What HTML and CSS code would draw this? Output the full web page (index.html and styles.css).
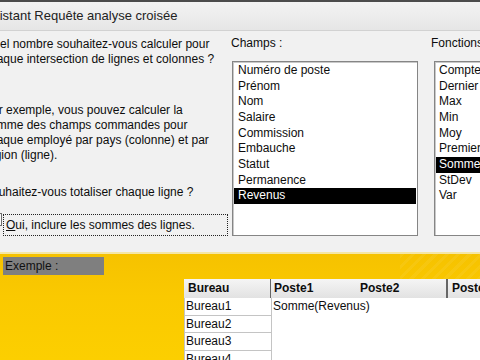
FILE: index.html
```html
<!DOCTYPE html>
<html lang="fr">
<head>
<meta charset="utf-8">
<title>Assistant Requête analyse croisée</title>
<link rel="stylesheet" href="styles.css">
</head>
<body>
<div class="screen">
  <div class="topline"></div>
  <div class="titlebar"><span class="title">Assistant Requête analyse croisée</span></div>
  <div class="dialog">
    <div class="left">
      <p class="p1">Quel nombre souhaitez-vous calculer pour<br>chaque intersection de lignes et colonnes ?</p>
      <p class="p2">Par exemple, vous pouvez calculer la<br>somme des champs commandes pour<br>chaque employé par pays (colonne) et par<br>région (ligne).</p>
      <p class="p3">Souhaitez-vous totaliser chaque ligne ?</p>
      <div class="check-row">
        <span class="checkbox"></span>
        <span class="focus"><u>O</u>ui, inclure les sommes des lignes.</span>
      </div>
    </div>
    <div class="col champs">
      <div class="label">Champs :</div>
      <ul class="list">
        <li>Numéro de poste</li>
        <li>Prénom</li>
        <li>Nom</li>
        <li>Salaire</li>
        <li>Commission</li>
        <li>Embauche</li>
        <li>Statut</li>
        <li>Permanence</li>
        <li class="sel">Revenus</li>
      </ul>
    </div>
    <div class="col fonctions">
      <div class="label">Fonctions :</div>
      <ul class="list">
        <li>Compte</li>
        <li>Dernier</li>
        <li>Max</li>
        <li>Min</li>
        <li>Moy</li>
        <li>Premier</li>
        <li class="sel">Somme</li>
        <li>StDev</li>
        <li>Var</li>
      </ul>
    </div>
  </div>
  <div class="sample">
    <div class="stripes"></div>
    <div class="sample-label">Exemple :</div>
    <div class="grid">
      <div class="hrow">
        <div class="hcell c-bureau">Bureau</div>
        <div class="hcell c-poste1">Poste1</div>
        <div class="hcell c-poste2">Poste2</div>
        <div class="hcell c-poste3">Poste3</div>
      </div>
      <div class="gbody">
        <div class="rowheads">
          <div class="rcell">Bureau1</div>
          <div class="rcell">Bureau2</div>
          <div class="rcell">Bureau3</div>
          <div class="rcell">Bureau4</div>
        </div>
        <div class="data">Somme(Revenus)</div>
      </div>
    </div>
  </div>
</div>
</body>
</html>
```

FILE: styles.css
```css
* { box-sizing: border-box; }
html, body {
  margin: 0;
  padding: 0;
}
body {
  width: 480px;
  height: 360px;
  overflow: hidden;
  font-family: "Liberation Sans", Arial, sans-serif;
  font-size: 12px;
  color: #0d0d0d;
  background: #f0f0f0;
}
.screen {
  width: 480px;
  height: 360px;
  display: flex;
  flex-direction: column;
  overflow: hidden;
}
.topline {
  height: 2px;
  flex: none;
  background: #4c4c4c;
}
.titlebar {
  height: 29px;
  flex: none;
  background: linear-gradient(#f3f3f3, #e6e6e6);
  border-bottom: 1px solid #d2d2d2;
  display: flex;
  align-items: center;
  padding-bottom: 2px;
  overflow: hidden;
  white-space: nowrap;
}
.title {
  margin-left: -22px;
  font-size: 13px;
  color: #222;
}
.dialog {
  height: 221px;
  flex: none;
  display: flex;
  background: #f1f1f1;
  overflow: hidden;
  padding-top: 5px;
}
.left {
  flex: none;
  width: 245px;
  margin-left: -16px;
  margin-right: 2px;
  line-height: 15px;
  white-space: nowrap;
}
.left p { margin: 0; }
.p1 { padding-top: 1px; }
.p2 { margin-top: 36px !important; }
.p3 { margin-top: 22px !important; }
.check-row {
  display: flex;
  align-items: flex-start;
  margin-top: 14px;
}
.checkbox {
  flex: none;
  width: 13px;
  height: 13px;
  border: 1px solid #6d6d6d;
  background: #fafafa;
  margin-left: 5px;
  margin-top: -1px;
}
.focus {
  flex: none;
  width: 225px;
  height: 22px;
  margin-left: 1px;
  border: 1px dotted #222;
  padding: 3px 0 0 2px;
  line-height: 15px;
}
.col { flex: none; }
.champs { width: 200px; }
.fonctions { width: 120px; }
.label {
  line-height: 15px;
  height: 15px;
}
.list {
  list-style: none;
  margin: 10px 0 0 1px;
  padding: 1px 0 0 0;
  height: 175px;
  background: #fff;
  border: 1px solid #858585;
  box-shadow: inset 1px 1px 0 #c9c9c9;
}
.champs .list { width: 186px; }
.fonctions .list { width: 110px; margin-left: 3px; }
.list li {
  height: 15.66px;
  line-height: 15.66px;
  padding-left: 4px;
  margin: 0 1px;
  white-space: nowrap;
}
.fonctions .list li { padding-left: 3px; }
.list li.sel {
  background: #000;
  color: #fff;
}
.sample {
  flex: 1;
  position: relative;
  background: linear-gradient(#f6c200, #fac900 40%, #fccf00);
  border-top: 2px solid #f4e6a6;
  padding: 3px 0 0 3px;
  overflow: hidden;
}
.stripes {
  position: absolute;
  right: 0;
  top: 0;
  width: 80px;
  height: 26px;
  background: repeating-linear-gradient(135deg, rgba(255,255,255,0.06) 0 3px, rgba(255,255,255,0) 3px 8px);
}
.sample-label {
  position: relative;
  width: 101px;
  height: 18px;
  background: #7f7f7f;
  color: #111;
  line-height: 18px;
  padding-left: 2px;
  font-size: 12px;
}
.grid {
  position: relative;
  margin: 4px 0 0 181px;
  width: 300px;
}
.hrow {
  display: flex;
  height: 19px;
  background: linear-gradient(#f5f5f5, #e2e2e2);
  font-weight: bold;
  line-height: 19px;
}
.hcell {
  flex: none;
  padding-left: 4px;
  white-space: nowrap;
}
.c-bureau { width: 87px; border-right: 1px solid #666; }
.c-poste1 { width: 88px; padding-left: 3px; }
.c-poste2 { width: 89px; padding-left: 1px; border-right: 2px solid #666; }
.c-poste3 { width: 40px; }
.gbody {
  display: flex;
  height: 70px;
}
.rowheads {
  flex: none;
  width: 88px;
  background: #f6f6f6;
}
.rcell {
  height: 17.5px;
  line-height: 16px;
  background: #fff;
  border: 1px solid #c4c4c4;
  border-top: none;
  padding-left: 1px;
}
.data {
  flex: 1;
  background: #fff;
  padding: 1px 0 0 1px;
  line-height: 15px;
}
```
